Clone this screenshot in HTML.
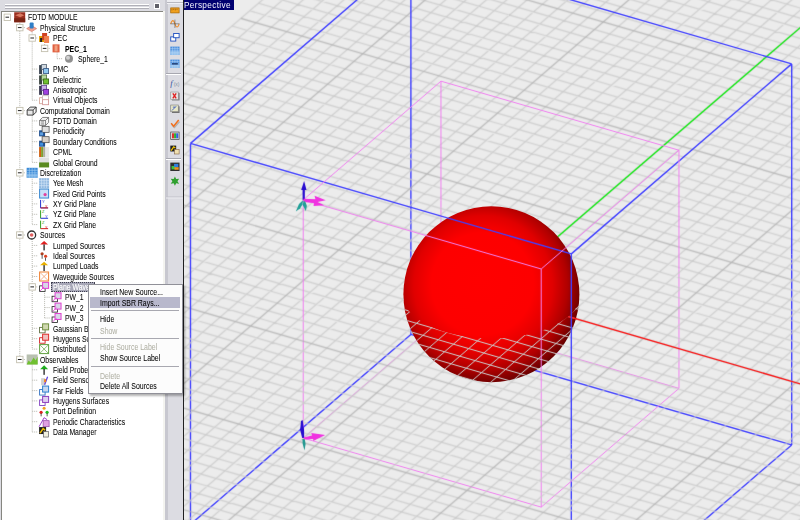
<!DOCTYPE html>
<html><head><meta charset="utf-8"><style>
html,body{margin:0;padding:0;}
body{width:800px;height:520px;overflow:hidden;position:relative;background:#dcdce2;font-family:"Liberation Sans",sans-serif;}
#view{position:absolute;left:184px;top:0;width:616px;height:520px;}
#vline{position:absolute;left:183px;top:0;width:1px;height:520px;background:#202020;}
#persp{position:absolute;left:184px;top:0;width:50px;height:9.5px;background:#000070;}
#persp span{position:absolute;left:0px;top:-1.3px;color:#f4f4ff;font-size:9.4px;letter-spacing:0.4px;line-height:11px;white-space:nowrap;transform:scaleX(0.88);transform-origin:left top;}
#hdr{position:absolute;left:0;top:0;width:163px;height:11px;background:#dcdce2;}
.grip{position:absolute;left:5px;width:144px;height:1px;}
#pbtn{position:absolute;left:154px;top:3px;width:6px;height:6px;background:#606068;border:1px solid #fff;box-sizing:border-box;}
#panel{position:absolute;left:1px;top:11px;width:162px;height:520px;background:#fff;border-left:1px solid #868680;border-top:1px solid #868680;box-sizing:border-box;}
.tl{position:absolute;left:0;top:0;}
.t{position:absolute;font-size:8.7px;line-height:10px;white-space:nowrap;color:#000;-webkit-text-stroke:0.05px #000;transform:scaleX(0.79);transform-origin:left top;}
.t.b{font-weight:bold;}
.t.w{color:#fff;-webkit-text-stroke:0.2px #fff;}
.sel{position:absolute;width:44px;height:10px;background:#a8a8b8;border:1px dotted #404050;box-sizing:border-box;}
#tbstrip{position:absolute;left:163px;top:0;width:20px;height:520px;background:#dcdce2;}
#tbedge1{position:absolute;left:163px;top:11px;width:2px;height:509px;background:#f4f4f0;}
#tbedge2{position:absolute;left:165px;top:0;width:3px;height:520px;background:#c8c8d0;}
#tb{position:absolute;left:165px;top:0;}
#menu{position:absolute;left:88px;top:284.2px;width:94.5px;height:109.7px;background:#fcfcfc;border:1px solid #909098;box-sizing:border-box;box-shadow:2px 2px 2px rgba(0,0,0,0.3);}
.msep{position:absolute;left:91px;width:88px;height:1px;background:#a8a8b0;}
.mhl{position:absolute;left:90px;width:90px;height:10.4px;background:#b8b8cc;}
.mt{position:absolute;left:100.4px;font-size:8.7px;line-height:10px;white-space:nowrap;color:#000;-webkit-text-stroke:0.05px #000;transform:scaleX(0.8);transform-origin:left top;}
.mt.dis{color:#b0b0a4;-webkit-text-stroke:0.05px #b0b0a4;}
</style></head><body>
<div id="hdr"><div class="grip" style="top:4px;background:#fff"></div><div class="grip" style="top:5px;background:#b0b0b8"></div><div class="grip" style="top:7px;background:#fff"></div><div class="grip" style="top:8px;background:#b0b0b8"></div><div id="pbtn"></div></div>
<div id="panel"></div>
<div id="tree" style="position:absolute;left:0;top:0;width:163px;height:520px;">
<svg class="tl" width="163" height="520" viewBox="0 0 163 520"><g stroke="#b8b8b0" stroke-width="1" stroke-dasharray="1 1"><line x1="19.8" y1="21.2" x2="19.8" y2="359.5" /><line x1="32.2" y1="31.6" x2="32.2" y2="100.2" /><line x1="44.6" y1="42.0" x2="44.6" y2="48.4" /><line x1="57.1" y1="52.4" x2="57.1" y2="58.7" /><line x1="32.2" y1="114.6" x2="32.2" y2="162.4" /><line x1="32.2" y1="176.8" x2="32.2" y2="224.6" /><line x1="32.2" y1="239.0" x2="32.2" y2="349.1" /><line x1="44.6" y1="290.9" x2="44.6" y2="318.0" /><line x1="32.2" y1="363.5" x2="32.2" y2="432.0" /><line x1="19.8" y1="27.6" x2="25.8" y2="27.6" /><line x1="32.2" y1="38.0" x2="38.2" y2="38.0" /><line x1="44.6" y1="48.4" x2="50.6" y2="48.4" /><line x1="57.1" y1="58.7" x2="63.1" y2="58.7" /><line x1="32.2" y1="69.1" x2="38.2" y2="69.1" /><line x1="32.2" y1="79.5" x2="38.2" y2="79.5" /><line x1="32.2" y1="89.8" x2="38.2" y2="89.8" /><line x1="32.2" y1="100.2" x2="38.2" y2="100.2" /><line x1="19.8" y1="110.6" x2="25.8" y2="110.6" /><line x1="32.2" y1="120.9" x2="38.2" y2="120.9" /><line x1="32.2" y1="131.3" x2="38.2" y2="131.3" /><line x1="32.2" y1="141.7" x2="38.2" y2="141.7" /><line x1="32.2" y1="152.1" x2="38.2" y2="152.1" /><line x1="32.2" y1="162.4" x2="38.2" y2="162.4" /><line x1="19.8" y1="172.8" x2="25.8" y2="172.8" /><line x1="32.2" y1="183.2" x2="38.2" y2="183.2" /><line x1="32.2" y1="193.5" x2="38.2" y2="193.5" /><line x1="32.2" y1="203.9" x2="38.2" y2="203.9" /><line x1="32.2" y1="214.3" x2="38.2" y2="214.3" /><line x1="32.2" y1="224.6" x2="38.2" y2="224.6" /><line x1="19.8" y1="235.0" x2="25.8" y2="235.0" /><line x1="32.2" y1="245.4" x2="38.2" y2="245.4" /><line x1="32.2" y1="255.8" x2="38.2" y2="255.8" /><line x1="32.2" y1="266.1" x2="38.2" y2="266.1" /><line x1="32.2" y1="276.5" x2="38.2" y2="276.5" /><line x1="32.2" y1="286.9" x2="38.2" y2="286.9" /><line x1="44.6" y1="297.2" x2="50.6" y2="297.2" /><line x1="44.6" y1="307.6" x2="50.6" y2="307.6" /><line x1="44.6" y1="318.0" x2="50.6" y2="318.0" /><line x1="32.2" y1="328.3" x2="38.2" y2="328.3" /><line x1="32.2" y1="338.7" x2="38.2" y2="338.7" /><line x1="32.2" y1="349.1" x2="38.2" y2="349.1" /><line x1="19.8" y1="359.5" x2="25.8" y2="359.5" /><line x1="32.2" y1="369.8" x2="38.2" y2="369.8" /><line x1="32.2" y1="380.2" x2="38.2" y2="380.2" /><line x1="32.2" y1="390.6" x2="38.2" y2="390.6" /><line x1="32.2" y1="400.9" x2="38.2" y2="400.9" /><line x1="32.2" y1="411.3" x2="38.2" y2="411.3" /><line x1="32.2" y1="421.7" x2="38.2" y2="421.7" /><line x1="32.2" y1="432.0" x2="38.2" y2="432.0" /></g><rect x="4.1" y="14.1" width="6.4" height="6.4" fill="#fff" stroke="#c4c0b0" stroke-width="0.9"/><line x1="5.5" y1="17.2" x2="9.1" y2="17.2" stroke="#202020" stroke-width="1"/><rect x="16.6" y="24.4" width="6.4" height="6.4" fill="#fff" stroke="#c4c0b0" stroke-width="0.9"/><line x1="17.9" y1="27.6" x2="21.6" y2="27.6" stroke="#202020" stroke-width="1"/><rect x="29.0" y="34.8" width="6.4" height="6.4" fill="#fff" stroke="#c4c0b0" stroke-width="0.9"/><line x1="30.4" y1="38.0" x2="34.0" y2="38.0" stroke="#202020" stroke-width="1"/><rect x="41.4" y="45.2" width="6.4" height="6.4" fill="#fff" stroke="#c4c0b0" stroke-width="0.9"/><line x1="42.8" y1="48.4" x2="46.4" y2="48.4" stroke="#202020" stroke-width="1"/><rect x="16.6" y="107.4" width="6.4" height="6.4" fill="#fff" stroke="#c4c0b0" stroke-width="0.9"/><line x1="17.9" y1="110.6" x2="21.6" y2="110.6" stroke="#202020" stroke-width="1"/><rect x="16.6" y="169.6" width="6.4" height="6.4" fill="#fff" stroke="#c4c0b0" stroke-width="0.9"/><line x1="17.9" y1="172.8" x2="21.6" y2="172.8" stroke="#202020" stroke-width="1"/><rect x="16.6" y="231.8" width="6.4" height="6.4" fill="#fff" stroke="#c4c0b0" stroke-width="0.9"/><line x1="17.9" y1="235.0" x2="21.6" y2="235.0" stroke="#202020" stroke-width="1"/><rect x="29.0" y="283.7" width="6.4" height="6.4" fill="#fff" stroke="#c4c0b0" stroke-width="0.9"/><line x1="30.4" y1="286.9" x2="34.0" y2="286.9" stroke="#202020" stroke-width="1"/><rect x="16.6" y="356.3" width="6.4" height="6.4" fill="#fff" stroke="#c4c0b0" stroke-width="0.9"/><line x1="17.9" y1="359.5" x2="21.6" y2="359.5" stroke="#202020" stroke-width="1"/><g transform="translate(14.20,12.25)"><rect x="0" y="0" width="11" height="10" fill="#9a3020"/><path d="M1 3 L6 1 L10 3 L6 5Z" fill="#d87860"/><rect x="0" y="6" width="11" height="4" fill="#7a2414"/></g><g transform="translate(26.65,22.62)"><path d="M0 6 L5 3 L10 6 L5 9Z" fill="#f0a090" stroke="#d07060" stroke-width="0.6"/><rect x="3" y="0" width="4" height="6" rx="1" fill="#2f7fc8"/></g><g transform="translate(39.10,32.99)"><rect x="0" y="3" width="5" height="6" fill="#e0a000"/><rect x="3" y="0" width="5" height="7" fill="#d04020"/><rect x="5" y="3" width="5" height="7" fill="#f08050"/><rect x="1" y="5" width="2" height="4" fill="#202020"/></g><g transform="translate(51.55,43.36)"><rect x="1" y="1" width="7" height="8" fill="#e06040"/><rect x="3" y="2" width="3" height="6" fill="#f0a080"/></g><g transform="translate(64.00,53.73)"><circle cx="5" cy="5" r="4" fill="#909090"/><circle cx="4" cy="4" r="2" fill="#d0d0d0"/></g><g transform="translate(39.10,64.10)"><rect x="0" y="1" width="3" height="9" fill="#3a4450"/><rect x="2.5" y="0.5" width="5" height="5" fill="#d0d8e0" stroke="#506070" stroke-width="0.8"/><rect x="4.5" y="4.5" width="5" height="5" fill="#90c8f0" stroke="#305080" stroke-width="0.8"/></g><g transform="translate(39.10,74.47)"><rect x="0" y="1" width="3" height="9" fill="#3a4440"/><rect x="2.5" y="0.5" width="5" height="5" fill="#b8d8a0" stroke="#507040" stroke-width="0.8"/><rect x="4.5" y="4.5" width="5" height="5" fill="#70c030" stroke="#306010" stroke-width="0.8"/></g><g transform="translate(39.10,84.84)"><rect x="0" y="1" width="3" height="9" fill="#3a3a50"/><rect x="2.5" y="0.5" width="5" height="5" fill="#c8b0e8" stroke="#604090" stroke-width="0.8"/><rect x="4.5" y="4.5" width="5" height="5" fill="#a040e0" stroke="#502080" stroke-width="0.8"/></g><g transform="translate(39.10,95.21)"><rect x="0.5" y="2.5" width="6" height="6" fill="#fff" stroke="#d0a090" stroke-width="0.8"/><rect x="3.5" y="0.5" width="6" height="6" fill="#fff" stroke="#c0b0b0" stroke-width="0.8"/><rect x="3.5" y="4.5" width="6" height="5" fill="#fff" stroke="#d09090" stroke-width="0.8"/></g><g transform="translate(26.65,105.58)"><path d="M0.5 4.5 H6.5 V9.5 H0.5Z M0.5 4.5 L3.5 1.5 H9.5 L6.5 4.5 M9.5 1.5 V6.5 L6.5 9.5" fill="#e8e8e8" stroke="#303030" stroke-width="0.9"/></g><g transform="translate(39.10,115.95)"><path d="M0.5 4.5 H6.5 V9.5 H0.5Z M0.5 4.5 L3.5 1.5 H9.5 L6.5 4.5 M9.5 1.5 V6.5 L6.5 9.5 M2 6 H5 M2 8 H5" fill="#f4f4f4" stroke="#505050" stroke-width="0.7"/></g><g transform="translate(39.10,126.32)"><rect x="0" y="4" width="6" height="6" fill="#205090"/><rect x="3" y="0" width="7" height="6" fill="#e0e0e0" stroke="#404040" stroke-width="0.7"/><rect x="1" y="6" width="3" height="3" fill="#60a0e0"/></g><g transform="translate(39.10,136.69)"><rect x="0" y="4" width="6" height="6" fill="#205090"/><rect x="3" y="0" width="7" height="6" fill="#d8d0c8" stroke="#404040" stroke-width="0.7"/><rect x="1" y="6" width="3" height="3" fill="#4090e0"/></g><g transform="translate(39.10,147.06)"><rect x="0" y="0" width="10" height="10" fill="#e8e8e8"/><rect x="0" y="0" width="2" height="10" fill="#d06010"/><rect x="2" y="0" width="2" height="10" fill="#80a030"/><rect x="4" y="0" width="2" height="10" fill="#b0b0a0"/></g><g transform="translate(39.10,157.43)"><rect x="0" y="0" width="10" height="6" fill="#e0e0e0"/><rect x="0" y="5" width="10" height="5" fill="#5a8a20"/></g><g transform="translate(26.65,167.80)"><rect x="0" y="0" width="11" height="10" fill="#3a8ad8"/><path d="M0 2.5H11M0 5H11M0 7.5H11M2.75 0V10M5.5 0V10M8.25 0V10" stroke="#a8d0f0" stroke-width="0.6"/><rect x="0" y="6" width="11" height="4" fill="#9ac8f0" opacity="0.6"/></g><g transform="translate(39.10,178.17)"><rect x="0" y="0" width="10" height="10" fill="#90b8e0"/><path d="M0 2.5H10M0 5H10M0 7.5H10M2.5 0V10M5 0V10M7.5 0V10" stroke="#d8e8f8" stroke-width="0.6"/></g><g transform="translate(39.10,188.54)"><rect x="0.5" y="0.5" width="9" height="9" fill="#c8e0f8" stroke="#3a88d0"/><circle cx="6" cy="6" r="1.6" fill="#e040a0"/></g><g transform="translate(39.10,198.91)"><path d="M1.5 1V9H9" fill="none" stroke="#2030d0" stroke-width="1"/><path d="M1.5 9H9" stroke="#d02020" stroke-width="1"/><text x="3" y="4" font-size="4" fill="#2030d0">Y</text><text x="6" y="9" font-size="4" fill="#d02020">X</text></g><g transform="translate(39.10,209.28)"><path d="M1.5 1V9" stroke="#30a020" stroke-width="1"/><path d="M1.5 9H9" stroke="#2030d0" stroke-width="1"/><text x="3" y="4" font-size="4" fill="#30a020">Z</text><text x="6" y="9" font-size="4" fill="#2030d0">Y</text></g><g transform="translate(39.10,219.65)"><path d="M1.5 1V9" stroke="#30a020" stroke-width="1"/><path d="M1.5 9H9" stroke="#d02020" stroke-width="1"/><text x="3" y="4" font-size="4" fill="#30a020">Z</text><text x="6" y="9" font-size="4" fill="#d02020">X</text></g><g transform="translate(26.65,230.02)"><circle cx="5" cy="5" r="4" fill="#fff" stroke="#303030" stroke-width="1.3"/><circle cx="5" cy="5" r="1.8" fill="#e06060"/></g><g transform="translate(39.10,240.39)"><path d="M1 4 L5 0.5 L9 4Z" fill="#e02020"/><rect x="4.3" y="4" width="1.4" height="6" fill="#303030"/></g><g transform="translate(39.10,250.76)"><circle cx="3" cy="3" r="1.6" fill="#b04020"/><circle cx="6.5" cy="5.5" r="1.6" fill="#e04020"/><rect x="2.6" y="4" width="0.8" height="4" fill="#303030"/><rect x="6.1" y="7" width="0.8" height="3" fill="#303030"/></g><g transform="translate(39.10,261.13)"><path d="M1 4 L5 0.5 L9 4Z" fill="#e8b000"/><rect x="4.3" y="4" width="1.4" height="6" fill="#303030"/></g><g transform="translate(39.10,271.50)"><rect x="0.5" y="0.5" width="9" height="9" fill="#fff" stroke="#f08030" stroke-width="1"/><path d="M1 1L9 9M9 1L1 9" stroke="#f0a070" stroke-width="0.8"/></g><g transform="translate(39.10,281.87)"><rect x="0.5" y="4" width="5.5" height="5.5" fill="#fff" stroke="#202020" stroke-width="0.8"/><rect x="3.5" y="0.5" width="6" height="6" fill="#d8d8e8" stroke="#e040d0" stroke-width="1"/><path d="M1 9 L5 5" stroke="#e040d0" stroke-width="0.8"/></g><g transform="translate(51.55,292.24)"><rect x="0.5" y="4" width="5.5" height="5.5" fill="#fff" stroke="#202020" stroke-width="0.8"/><rect x="3.5" y="0.5" width="6" height="6" fill="#d8d8e8" stroke="#e040d0" stroke-width="1"/><path d="M1 9 L5 5" stroke="#e040d0" stroke-width="0.8"/></g><g transform="translate(51.55,302.61)"><rect x="0.5" y="4" width="5.5" height="5.5" fill="#fff" stroke="#202020" stroke-width="0.8"/><rect x="3.5" y="0.5" width="6" height="6" fill="#d8d8e8" stroke="#e040d0" stroke-width="1"/><path d="M1 9 L5 5" stroke="#e040d0" stroke-width="0.8"/></g><g transform="translate(51.55,312.98)"><rect x="0.5" y="4" width="5.5" height="5.5" fill="#fff" stroke="#202020" stroke-width="0.8"/><rect x="3.5" y="0.5" width="6" height="6" fill="#d8d8e8" stroke="#e040d0" stroke-width="1"/><path d="M1 9 L5 5" stroke="#e040d0" stroke-width="0.8"/></g><g transform="translate(39.10,323.35)"><rect x="0.5" y="4" width="5.5" height="5.5" fill="#fff" stroke="#506030" stroke-width="0.8"/><rect x="3.5" y="0.5" width="6" height="6" fill="#d0d8b0" stroke="#709040" stroke-width="1"/></g><g transform="translate(39.10,333.72)"><rect x="0.5" y="4" width="5.5" height="5.5" fill="#fff" stroke="#d02020" stroke-width="0.9"/><rect x="3.5" y="0.5" width="6" height="6" fill="#f0c0c0" stroke="#e03030" stroke-width="1"/></g><g transform="translate(39.10,344.09)"><rect x="0.5" y="0.5" width="9" height="9" fill="#fff" stroke="#60a040" stroke-width="1"/><path d="M1 1L9 9M9 1L1 9" stroke="#60a040" stroke-width="0.7"/></g><g transform="translate(26.65,354.46)"><rect x="0" y="0" width="11" height="10" fill="#b8c0b0"/><path d="M0 10 L2 6 L4 8 L7 3 L9 6 L11 2 V10Z" fill="#70c030"/></g><g transform="translate(39.10,364.83)"><path d="M1 4.5 L5 0.5 L9 4.5Z" fill="#20b020"/><rect x="4.3" y="4" width="1.4" height="6" fill="#303030"/></g><g transform="translate(39.10,375.20)"><rect x="2" y="3" width="4" height="7" fill="#d0d0d0"/><path d="M5 9 L8 1 L9 2 L6 10Z" fill="#6040e0"/><rect x="5" y="4" width="2" height="3" fill="#f08020"/></g><g transform="translate(39.10,385.57)"><rect x="0.5" y="4" width="5.5" height="5.5" fill="#fff" stroke="#3070c0" stroke-width="0.9"/><rect x="3.5" y="0.5" width="6" height="6" fill="#c8d8f0" stroke="#3080d0" stroke-width="1"/></g><g transform="translate(39.10,395.94)"><rect x="0.5" y="4" width="5.5" height="5.5" fill="#fff" stroke="#8040c0" stroke-width="0.9"/><rect x="3.5" y="0.5" width="6" height="6" fill="#e0d0f0" stroke="#9040c0" stroke-width="1"/></g><g transform="translate(39.10,406.31)"><circle cx="5" cy="2" r="1.5" fill="#f0a020"/><circle cx="2" cy="6" r="1.6" fill="#e02020"/><circle cx="8" cy="6" r="1.6" fill="#20c020"/><rect x="1.6" y="7" width="0.8" height="3" fill="#303030"/><rect x="7.6" y="7" width="0.8" height="3" fill="#303030"/></g><g transform="translate(39.10,416.68)"><path d="M0 10 L5 1 L8 3" fill="none" stroke="#a040d0" stroke-width="1"/><rect x="4" y="4" width="6" height="6" fill="#e0a0e0" stroke="#9040a0" stroke-width="0.7"/></g><g transform="translate(39.10,427.05)"><rect x="0" y="0" width="7" height="7" fill="#202020"/><path d="M1 6 L4 1.5 L6 3" fill="none" stroke="#f0c000" stroke-width="1.5"/><rect x="4.5" y="4.5" width="5" height="5.5" fill="#f0f0e0" stroke="#606060" stroke-width="0.7"/></g></svg>
<div class="t" style="left:28.00px;top:12.40px">FDTD MODULE</div>
<div class="t" style="left:40.45px;top:22.77px">Physical Structure</div>
<div class="t" style="left:52.90px;top:33.14px">PEC</div>
<div class="t b" style="left:65.35px;top:43.51px">PEC_1</div>
<div class="t" style="left:77.80px;top:53.88px">Sphere_1</div>
<div class="t" style="left:52.90px;top:64.25px">PMC</div>
<div class="t" style="left:52.90px;top:74.62px">Dielectric</div>
<div class="t" style="left:52.90px;top:84.99px">Anisotropic</div>
<div class="t" style="left:52.90px;top:95.36px">Virtual Objects</div>
<div class="t" style="left:40.45px;top:105.73px">Computational Domain</div>
<div class="t" style="left:52.90px;top:116.10px">FDTD Domain</div>
<div class="t" style="left:52.90px;top:126.47px">Periodicity</div>
<div class="t" style="left:52.90px;top:136.84px">Boundary Conditions</div>
<div class="t" style="left:52.90px;top:147.21px">CPML</div>
<div class="t" style="left:52.90px;top:157.58px">Global Ground</div>
<div class="t" style="left:40.45px;top:167.95px">Discretization</div>
<div class="t" style="left:52.90px;top:178.32px">Yee Mesh</div>
<div class="t" style="left:52.90px;top:188.69px">Fixed Grid Points</div>
<div class="t" style="left:52.90px;top:199.06px">XY Grid Plane</div>
<div class="t" style="left:52.90px;top:209.43px">YZ Grid Plane</div>
<div class="t" style="left:52.90px;top:219.80px">ZX Grid Plane</div>
<div class="t" style="left:40.45px;top:230.17px">Sources</div>
<div class="t" style="left:52.90px;top:240.54px">Lumped Sources</div>
<div class="t" style="left:52.90px;top:250.91px">Ideal Sources</div>
<div class="t" style="left:52.90px;top:261.28px">Lumped Loads</div>
<div class="t" style="left:52.90px;top:271.65px">Waveguide Sources</div>
<div class="sel" style="left:51.40px;top:281.57px"></div>
<div class="t w" style="left:52.90px;top:282.02px">Plane Waves</div>
<div class="t" style="left:65.35px;top:292.39px">PW_1</div>
<div class="t" style="left:65.35px;top:302.76px">PW_2</div>
<div class="t" style="left:65.35px;top:313.13px">PW_3</div>
<div class="t" style="left:52.90px;top:323.50px">Gaussian Beams</div>
<div class="t" style="left:52.90px;top:333.87px">Huygens Sources</div>
<div class="t" style="left:52.90px;top:344.24px">Distributed Sources</div>
<div class="t" style="left:40.45px;top:354.61px">Observables</div>
<div class="t" style="left:52.90px;top:364.98px">Field Probes</div>
<div class="t" style="left:52.90px;top:375.35px">Field Sensors</div>
<div class="t" style="left:52.90px;top:385.72px">Far Fields</div>
<div class="t" style="left:52.90px;top:396.09px">Huygens Surfaces</div>
<div class="t" style="left:52.90px;top:406.46px">Port Definition</div>
<div class="t" style="left:52.90px;top:416.83px">Periodic Characteristics</div>
<div class="t" style="left:52.90px;top:427.20px">Data Manager</div>
</div>
<div id="tbstrip"></div><div id="tbedge1"></div><div id="tbedge2"></div>
<svg id="tb" width="20" height="520" viewBox="0 0 20 520"><g transform="translate(5.3,6.20) scale(0.84)"><rect x="0.5" y="2" width="10" height="6" fill="#f0a020" stroke="#a06000" stroke-width="0.8"/><path d="M2 3V5M4 3V4.5M6 3V5M8 3V4.5" stroke="#704000" stroke-width="0.6"/></g><g transform="translate(5.3,19.60) scale(0.84)"><path d="M0.5 5 C2 0, 4 0, 5.5 5 S9 10, 10.5 5" fill="none" stroke="#f09030" stroke-width="1.3"/><path d="M5.5 0V10M0 5H11" stroke="#404040" stroke-width="0.6"/></g><g transform="translate(5.3,33.10) scale(0.84)"><rect x="0.5" y="4.5" width="6" height="5" fill="#fff" stroke="#2050c0" stroke-width="1.1"/><rect x="4" y="0.5" width="6.5" height="5" fill="#fff" stroke="#2050c0" stroke-width="1.1"/></g><g transform="translate(5.3,46.60) scale(0.84)"><rect x="0" y="0" width="11" height="10" fill="#4a90e0"/><path d="M0 2.5H11M0 5H11M0 7.5H11M2.75 0V10M5.5 0V10M8.25 0V10" stroke="#c0dcf8" stroke-width="0.6"/><rect x="0" y="5.5" width="11" height="4.5" fill="#b0d4f4" opacity="0.7"/></g><g transform="translate(5.3,59.60) scale(0.84)"><rect x="0" y="0" width="11" height="10" fill="#4a90e0"/><path d="M0 2.5H11M0 5H11M0 7.5H11M2.75 0V10M5.5 0V10M8.25 0V10" stroke="#c0dcf8" stroke-width="0.6"/><rect x="0" y="6" width="11" height="4" fill="#b0d4f4" opacity="0.7"/><rect x="2" y="4" width="7" height="2" fill="#2a4a80"/></g><g transform="translate(5.3,78.60) scale(0.84)"><text x="0" y="9" font-family="Liberation Serif" font-size="10" font-style="italic" fill="#3050a0">f</text><text x="4" y="9" font-family="Liberation Sans" font-size="6" fill="#8090a0">(x)</text></g><g transform="translate(5.3,91.60) scale(0.84)"><rect x="2" y="1.5" width="9" height="9" fill="#707070"/><rect x="0.5" y="0.5" width="9" height="9" fill="#e4e4e4" stroke="#909090" stroke-width="0.7"/><path d="M3 2 L7 8 M7 2 L3 8" stroke="#e02020" stroke-width="1.6"/></g><g transform="translate(5.3,104.60) scale(0.84)"><rect x="2" y="2" width="9" height="8" fill="#707070"/><rect x="0.5" y="0.5" width="9" height="8" fill="#e8e8c8" stroke="#808080" stroke-width="0.8"/><path d="M2 7 L7 2 M3 3 H6" fill="none" stroke="#3050c0" stroke-width="1"/></g><g transform="translate(5.3,119.10) scale(0.84)"><path d="M2 7 L5 10 L11 3" fill="none" stroke="#b0b0b0" stroke-width="1.5"/><path d="M1 5 L4 8.5 L10 1" fill="none" stroke="#f07020" stroke-width="1.8"/></g><g transform="translate(5.3,131.60) scale(0.84)"><rect x="0.5" y="0.5" width="10" height="9" fill="#e0e0e0" stroke="#404040" stroke-width="0.8"/><rect x="2" y="2" width="2.5" height="6" fill="#e03030"/><rect x="4.5" y="2" width="2.5" height="6" fill="#30b030"/><rect x="7" y="2" width="2.5" height="6" fill="#3060e0"/></g><g transform="translate(5.3,145.60) scale(0.84)"><rect x="0" y="0" width="7" height="7" fill="#202020"/><path d="M1 6 L4 1.5 L6 3" fill="none" stroke="#f0c000" stroke-width="1.5"/><rect x="5" y="4.5" width="5.5" height="5.5" fill="#f0e0b0" stroke="#806040" stroke-width="0.7"/></g><g transform="translate(5.3,162.60) scale(0.84)"><rect x="0" y="0" width="11" height="10" fill="#303030"/><rect x="1.5" y="4" width="5" height="4" fill="#40c040"/><rect x="4.5" y="1.5" width="5" height="4" fill="#3080e0"/><rect x="5" y="5.5" width="5" height="3" fill="#f09020"/></g><g transform="translate(5.3,176.60) scale(0.84)"><path d="M5.5 0 L7 3 L10.5 2.5 L8.5 5.5 L10.5 8.5 L7 8 L5.5 11 L4 8 L0.5 8.5 L2.5 5.5 L0.5 2.5 L4 3Z" fill="#30a030"/></g><line x1="1" y1="73.5" x2="16" y2="73.5" stroke="#a8a8b0"/><line x1="1" y1="74.5" x2="16" y2="74.5" stroke="#ffffff"/><line x1="1" y1="158.5" x2="16" y2="158.5" stroke="#a8a8b0"/><line x1="1" y1="159.5" x2="16" y2="159.5" stroke="#ffffff"/><rect x="2" y="0" width="16" height="2" fill="#ececf0"/><line x1="2" y1="2.5" x2="18" y2="2.5" stroke="#b8b8c0"/><line x1="2" y1="3.5" x2="18" y2="3.5" stroke="#f0f0f4"/><line x1="1" y1="197" x2="18" y2="197" stroke="#c0c0c8"/><line x1="1" y1="198" x2="18" y2="198" stroke="#ececf0"/></svg>
<svg id="view" width="616" height="520" viewBox="0 0 616 520">
<defs><filter id="blur" filterUnits="userSpaceOnUse" x="-2" y="-2" width="620" height="524"><feConvolveMatrix order="3" kernelMatrix="1 2 1 2 8 2 1 2 1" divisor="20" edgeMode="duplicate"/></filter><filter id="blur2" filterUnits="userSpaceOnUse" x="-2" y="-2" width="620" height="524"><feConvolveMatrix order="3" kernelMatrix="0 1 0 1 12 1 0 1 0" divisor="16" edgeMode="duplicate"/></filter><radialGradient id="sg" cx="0.46" cy="0.46" r="0.58" fx="0.44" fy="0.42"><stop offset="0" stop-color="#ff0000"/><stop offset="0.5" stop-color="#fd0000"/><stop offset="0.68" stop-color="#e00000"/><stop offset="0.82" stop-color="#b00000"/><stop offset="0.93" stop-color="#780000"/><stop offset="1" stop-color="#4a0000"/></radialGradient><clipPath id="gclip"><path d="M218.40 294.30 A89.0 44.0 0 0 0 396.40 294.30 A88.0 88.0 0 0 1 219.40 294.30Z"/></clipPath><clipPath id="sclip"><circle cx="307.4" cy="294.3" r="88.0"/></clipPath></defs>
<rect x="0" y="0" width="616" height="520" fill="#ececec"/>
<g filter="url(#blur2)" fill="none"><path d="M6.49 524.42L6.49 333.90M387.31 526.00L387.31 444.39M607.71 444.92L607.71 254.40M513.65 526.00L607.71 444.92M6.49 524.42L11.92 526.00M226.89 334.43L226.89 143.91M6.49 524.42L226.89 334.43M226.89 334.43L607.71 444.92" stroke="#4040ff" stroke-width="1.4"/><path d="M119.22 438.07L119.22 319.00M357.23 507.12L357.23 388.05M494.98 388.38L494.98 269.30M357.23 507.12L494.98 388.38M119.22 438.07L357.23 507.12M256.97 319.33L256.97 200.25M119.22 438.07L256.97 319.33M256.97 319.33L494.98 388.38" stroke="#f080f0" stroke-width="1.0"/></g>
<g filter="url(#blur)"><path d="M-6.00 72.64L85.22 -6.00M-6.00 90.19L105.58 -6.00M-6.00 107.74L125.94 -6.00M-6.00 125.29L146.30 -6.00M-6.00 142.84L166.66 -6.00M-6.00 160.39L187.02 -6.00M-6.00 177.94L207.38 -6.00M-6.00 195.49L227.74 -6.00M-6.00 230.59L268.45 -6.00M-6.00 248.14L288.81 -6.00M-6.00 265.69L309.17 -6.00M-6.00 283.25L329.53 -6.00M-6.00 300.80L349.89 -6.00M-6.00 318.35L370.25 -6.00M-6.00 335.90L390.61 -6.00M-6.00 353.45L410.97 -6.00M-6.00 371.00L431.33 -6.00M-6.00 406.10L472.05 -6.00M-6.00 423.65L492.41 -6.00M-6.00 441.20L512.77 -6.00M-6.00 458.75L533.13 -6.00M-6.00 476.30L553.49 -6.00M-6.00 493.85L573.84 -6.00M-6.00 511.41L594.20 -6.00M-2.57 526.00L614.56 -6.00M17.79 526.00L622.00 5.14M58.51 526.00L622.00 40.24M78.87 526.00L622.00 57.79M99.23 526.00L622.00 75.34M119.59 526.00L622.00 92.89M139.94 526.00L622.00 110.44M160.30 526.00L622.00 128.00M180.66 526.00L622.00 145.55M201.02 526.00L622.00 163.10M221.38 526.00L622.00 180.65M262.10 526.00L622.00 215.75M282.46 526.00L622.00 233.30M302.82 526.00L622.00 250.85M323.18 526.00L622.00 268.40M343.54 526.00L622.00 285.95M363.90 526.00L622.00 303.50M384.26 526.00L622.00 321.05M404.62 526.00L622.00 338.60M424.98 526.00L622.00 356.16M465.69 526.00L622.00 391.26M486.05 526.00L622.00 408.81M506.41 526.00L622.00 426.36M526.77 526.00L622.00 443.91M547.13 526.00L622.00 461.46M567.49 526.00L622.00 479.01M587.85 526.00L622.00 496.56M608.21 526.00L622.00 514.11M-6.00 518.19L20.92 526.00M-6.00 497.88L90.94 526.00M-6.00 487.72L125.95 526.00M-6.00 477.56L160.96 526.00M-6.00 467.40L195.97 526.00M-6.00 457.25L230.98 526.00M-6.00 447.09L265.99 526.00M-6.00 436.93L301.00 526.00M-6.00 426.77L336.01 526.00M-6.00 416.62L371.02 526.00M-6.00 396.30L441.05 526.00M-6.00 386.15L476.06 526.00M-6.00 375.99L511.07 526.00M-6.00 365.83L546.08 526.00M-6.00 355.67L581.09 526.00M-6.00 345.52L616.10 526.00M-6.00 335.36L622.00 517.55M-6.00 325.20L622.00 507.40M-6.00 315.04L622.00 497.24M-6.00 294.73L622.00 476.93M-6.00 284.57L622.00 466.77M-6.00 274.41L622.00 456.61M-6.00 264.26L622.00 446.45M-6.00 254.10L622.00 436.30M-6.00 243.94L622.00 426.14M-6.00 233.79L622.00 415.98M-6.00 223.63L622.00 405.82M-6.00 213.47L622.00 395.67M-6.00 193.16L622.00 375.35M-6.00 183.00L622.00 365.19M-6.00 172.84L622.00 355.04M-6.00 162.68L622.00 344.88M-6.00 152.53L622.00 334.72M-6.00 142.37L622.00 324.57M-6.00 132.21L622.00 314.41M-6.00 122.05L622.00 304.25M-6.00 111.90L622.00 294.09M-6.00 91.58L622.00 273.78M-6.00 81.42L622.00 263.62M-4.81 71.61L622.00 253.46M4.00 64.01L622.00 243.31M12.82 56.41L622.00 233.15M21.64 48.81L622.00 222.99M30.45 41.21L622.00 212.83M39.27 33.61L622.00 202.68M48.08 26.01L622.00 192.52M65.71 10.81L622.00 172.20M74.53 3.21L622.00 162.05M83.35 -4.38L622.00 151.89M112.79 -6.00L622.00 141.73M147.80 -6.00L622.00 131.58M182.81 -6.00L622.00 121.42M217.82 -6.00L622.00 111.26M252.83 -6.00L622.00 101.10M287.84 -6.00L622.00 90.95M357.86 -6.00L622.00 70.63M392.87 -6.00L622.00 60.47M427.89 -6.00L622.00 50.32M462.90 -6.00L622.00 40.16M497.91 -6.00L622.00 30.00M532.92 -6.00L622.00 19.84M567.93 -6.00L622.00 9.69M602.94 -6.00L622.00 -0.47" stroke="#cbcbcb" stroke-width="1.15" fill="none"/><path d="M-6.00 213.04L248.09 -6.00M-6.00 388.55L451.69 -6.00M38.15 526.00L622.00 22.69M241.74 526.00L622.00 198.20M445.34 526.00L622.00 373.71M-6.00 508.03L55.93 526.00M-6.00 406.46L406.03 526.00M-6.00 304.89L622.00 487.08M-6.00 203.31L622.00 385.51M-6.00 101.74L622.00 283.94M56.90 18.41L622.00 182.36M322.85 -6.00L622.00 80.79" stroke="#b2b2b2" stroke-width="1.15" fill="none"/></g>
<g filter="url(#blur2)" fill="none"><path d="M226.89 143.91L226.89 -6.00" stroke="#4040ff" stroke-width="1.4"/><path d="M256.97 200.25L256.97 81.18" stroke="#f080f0" stroke-width="1.0"/><path d="M307.10 294.15L622.00 385.51" stroke="#ff1818" stroke-width="1.3"/><path d="M307.10 294.15L622.00 22.69" stroke="#18f018" stroke-width="1.3"/></g>
<circle cx="307.4" cy="294.3" r="88.0" fill="url(#sg)"/>
<g clip-path="url(#sclip)"><g filter="url(#blur2)" fill="none"><path d="M6.49 524.42L6.49 333.90M387.31 526.00L387.31 444.39M607.71 444.92L607.71 254.40M513.65 526.00L607.71 444.92M6.49 524.42L11.92 526.00" stroke="#4040ff" stroke-width="1.4"/><path d="M119.22 438.07L119.22 319.00M357.23 507.12L357.23 388.05M494.98 388.38L494.98 269.30M357.23 507.12L494.98 388.38M119.22 438.07L357.23 507.12" stroke="#f080f0" stroke-width="1.0"/></g></g>
<g clip-path="url(#gclip)"><g filter="url(#blur2)"><path d="M-6.00 72.64L85.22 -6.00M-6.00 90.19L105.58 -6.00M-6.00 107.74L125.94 -6.00M-6.00 125.29L146.30 -6.00M-6.00 142.84L166.66 -6.00M-6.00 160.39L187.02 -6.00M-6.00 177.94L207.38 -6.00M-6.00 195.49L227.74 -6.00M-6.00 230.59L268.45 -6.00M-6.00 248.14L288.81 -6.00M-6.00 265.69L309.17 -6.00M-6.00 283.25L329.53 -6.00M-6.00 300.80L349.89 -6.00M-6.00 318.35L370.25 -6.00M-6.00 335.90L390.61 -6.00M-6.00 353.45L410.97 -6.00M-6.00 371.00L431.33 -6.00M-6.00 406.10L472.05 -6.00M-6.00 423.65L492.41 -6.00M-6.00 441.20L512.77 -6.00M-6.00 458.75L533.13 -6.00M-6.00 476.30L553.49 -6.00M-6.00 493.85L573.84 -6.00M-6.00 511.41L594.20 -6.00M-2.57 526.00L614.56 -6.00M17.79 526.00L622.00 5.14M58.51 526.00L622.00 40.24M78.87 526.00L622.00 57.79M99.23 526.00L622.00 75.34M119.59 526.00L622.00 92.89M139.94 526.00L622.00 110.44M160.30 526.00L622.00 128.00M180.66 526.00L622.00 145.55M201.02 526.00L622.00 163.10M221.38 526.00L622.00 180.65M262.10 526.00L622.00 215.75M282.46 526.00L622.00 233.30M302.82 526.00L622.00 250.85M323.18 526.00L622.00 268.40M343.54 526.00L622.00 285.95M363.90 526.00L622.00 303.50M384.26 526.00L622.00 321.05M404.62 526.00L622.00 338.60M424.98 526.00L622.00 356.16M465.69 526.00L622.00 391.26M486.05 526.00L622.00 408.81M506.41 526.00L622.00 426.36M526.77 526.00L622.00 443.91M547.13 526.00L622.00 461.46M567.49 526.00L622.00 479.01M587.85 526.00L622.00 496.56M608.21 526.00L622.00 514.11M-6.00 518.19L20.92 526.00M-6.00 497.88L90.94 526.00M-6.00 487.72L125.95 526.00M-6.00 477.56L160.96 526.00M-6.00 467.40L195.97 526.00M-6.00 457.25L230.98 526.00M-6.00 447.09L265.99 526.00M-6.00 436.93L301.00 526.00M-6.00 426.77L336.01 526.00M-6.00 416.62L371.02 526.00M-6.00 396.30L441.05 526.00M-6.00 386.15L476.06 526.00M-6.00 375.99L511.07 526.00M-6.00 365.83L546.08 526.00M-6.00 355.67L581.09 526.00M-6.00 345.52L616.10 526.00M-6.00 335.36L622.00 517.55M-6.00 325.20L622.00 507.40M-6.00 315.04L622.00 497.24M-6.00 294.73L622.00 476.93M-6.00 284.57L622.00 466.77M-6.00 274.41L622.00 456.61M-6.00 264.26L622.00 446.45M-6.00 254.10L622.00 436.30M-6.00 243.94L622.00 426.14M-6.00 233.79L622.00 415.98M-6.00 223.63L622.00 405.82M-6.00 213.47L622.00 395.67M-6.00 193.16L622.00 375.35M-6.00 183.00L622.00 365.19M-6.00 172.84L622.00 355.04M-6.00 162.68L622.00 344.88M-6.00 152.53L622.00 334.72M-6.00 142.37L622.00 324.57M-6.00 132.21L622.00 314.41M-6.00 122.05L622.00 304.25M-6.00 111.90L622.00 294.09M-6.00 91.58L622.00 273.78M-6.00 81.42L622.00 263.62M-4.81 71.61L622.00 253.46M4.00 64.01L622.00 243.31M12.82 56.41L622.00 233.15M21.64 48.81L622.00 222.99M30.45 41.21L622.00 212.83M39.27 33.61L622.00 202.68M48.08 26.01L622.00 192.52M65.71 10.81L622.00 172.20M74.53 3.21L622.00 162.05M83.35 -4.38L622.00 151.89M112.79 -6.00L622.00 141.73M147.80 -6.00L622.00 131.58M182.81 -6.00L622.00 121.42M217.82 -6.00L622.00 111.26M252.83 -6.00L622.00 101.10M287.84 -6.00L622.00 90.95M357.86 -6.00L622.00 70.63M392.87 -6.00L622.00 60.47M427.89 -6.00L622.00 50.32M462.90 -6.00L622.00 40.16M497.91 -6.00L622.00 30.00M532.92 -6.00L622.00 19.84M567.93 -6.00L622.00 9.69M602.94 -6.00L622.00 -0.47" stroke="#cccccc" stroke-width="1.0" fill="none"/><path d="M-6.00 213.04L248.09 -6.00M-6.00 388.55L451.69 -6.00M38.15 526.00L622.00 22.69M241.74 526.00L622.00 198.20M445.34 526.00L622.00 373.71M-6.00 508.03L55.93 526.00M-6.00 406.46L406.03 526.00M-6.00 304.89L622.00 487.08M-6.00 203.31L622.00 385.51M-6.00 101.74L622.00 283.94M56.90 18.41L622.00 182.36M322.85 -6.00L622.00 80.79" stroke="#c4c4c4" stroke-width="1.0" fill="none"/><path d="M307.10 294.15L622.00 385.51" stroke="#ff1818" stroke-width="1.3"/></g></g>
<g filter="url(#blur2)" fill="none"><path d="M6.49 333.90L6.49 143.38M387.31 444.39L387.31 253.87M607.71 254.40L607.71 63.88M6.49 143.38L179.78 -6.00M387.31 253.87L607.71 63.88M6.49 143.38L387.31 253.87M366.86 -6.00L607.71 63.88" stroke="#4040ff" stroke-width="1.4"/><path d="M119.22 319.00L119.22 199.92M357.23 388.05L357.23 268.97M494.98 269.30L494.98 150.23M119.22 199.92L256.97 81.18M357.23 268.97L494.98 150.23M119.22 199.92L357.23 268.97M256.97 81.18L494.98 150.23" stroke="#f080f0" stroke-width="1.0"/></g>
<g filter="url(#blur2)"><path d="M118.60 199.90V189.90H117.20L120.10 181.10L122.50 189.90H120.80V199.90Z" fill="#2808d0"/><path d="M119.50 198.70L131.50 199.30L130.50 195.70L141.80 200.30L133.50 202.10L140.20 205.30L129.50 206.10L130.00 203.10L119.50 201.90Z" fill="#f030e0"/><path d="M119.00 200.20L115.00 203.90L111.80 211.50L116.00 208.40L118.50 204.40Z" fill="#20a098"/><path d="M119.80 200.20L118.70 204.90L121.80 211.10L122.90 206.10L121.50 201.90Z" fill="#20a098"/><path d="M118.20 437.90L116.20 429.90L117.00 420.90L118.60 419.90L120.00 428.90L120.20 437.90Z" fill="#2808d0"/><path d="M119.70 437.40L128.20 435.40L127.20 432.90L141.20 434.90L129.20 440.90L129.20 438.90L119.70 439.40Z" fill="#f030e0"/><path d="M118.40 438.90L120.70 438.90L121.60 443.90L120.50 450.40L118.70 443.90Z" fill="#209890"/></g>
</svg>
<div id="vline"></div>
<div id="persp"><span>Perspective</span></div>
<div id="menu"></div><div class="mt" style="top:286.75px">Insert New Source...</div><div class="mhl" style="top:297.4px"></div><div class="mt" style="top:297.65px">Import SBR Rays...</div><div class="msep" style="top:310.30px"></div><div class="mt" style="top:314.45px">Hide</div><div class="mt dis" style="top:325.55px">Show</div><div class="msep" style="top:338.00px"></div><div class="mt dis" style="top:342.15px">Hide Source Label</div><div class="mt" style="top:353.25px">Show Source Label</div><div class="msep" style="top:365.70px"></div><div class="mt dis" style="top:370.65px">Delete</div><div class="mt" style="top:381.45px">Delete All Sources</div>
</body></html>
